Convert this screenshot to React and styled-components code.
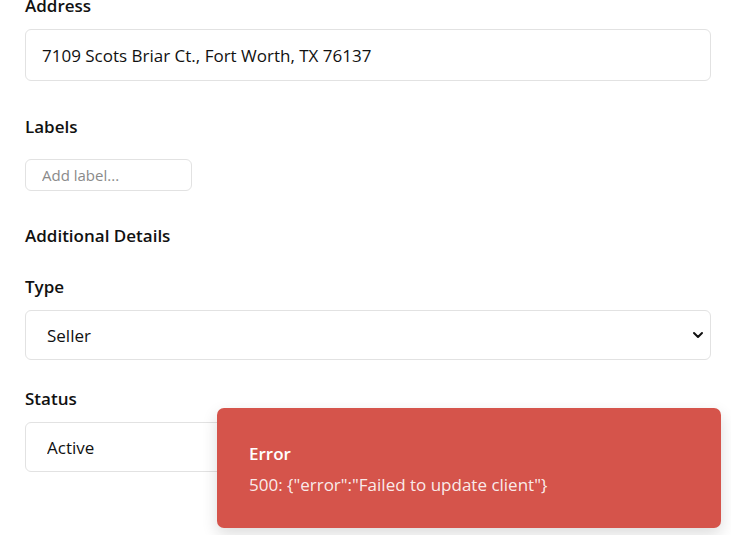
import React from 'react';
import styled, { createGlobalStyle } from 'styled-components';

const GlobalStyle = createGlobalStyle`
  html, body {
    margin: 0;
    padding: 0;
    background: #ffffff;
    overflow: hidden;
  }
  body {
    font-family: "Open Sans", "Noto Sans", Arial, sans-serif;
    color: #111111;
  }
`;

const Page = styled.div`
  width: 731px;
  height: 535px;
  overflow: hidden;
  position: relative;
`;

const Form = styled.div`
  display: flex;
  flex-direction: column;
  padding: 0 20px 0 25px;
  margin-top: -6px;
`;

const Field = styled.div`
  display: flex;
  flex-direction: column;
  gap: ${(p) => p.$gap || 11}px;
  margin-bottom: ${(p) => p.$space || 27}px;
`;

const Label = styled.label`
  font-size: 17px;
  font-weight: 600;
  line-height: 24px;
  color: #111111;
`;

const Section = styled.h3`
  margin: 0 0 27px;
  font-size: 17px;
  font-weight: 600;
  line-height: 24px;
  color: #111111;
`;

const Input = styled.input`
  box-sizing: border-box;
  width: ${(p) => (p.$small ? '167px' : '100%')};
  height: ${(p) => (p.$small ? '32px' : '52px')};
  padding: 0 16px;
  border: 1px solid #e2e2e2;
  border-radius: 6px;
  font-family: inherit;
  font-size: ${(p) => (p.$small ? '15px' : '17px')};
  color: #111111;
  background: #ffffff;
  outline: none;

  &::placeholder {
    color: #8a8a8a;
  }
`;

const SelectWrap = styled.div`
  position: relative;
  width: 100%;
`;

const Select = styled.select`
  box-sizing: border-box;
  width: 100%;
  height: 50px;
  padding: 0 21px;
  border: 1px solid #e2e2e2;
  border-radius: 6px;
  font-family: inherit;
  font-size: 17px;
  color: #111111;
  background: #ffffff;
  appearance: none;
  outline: none;
`;

const Chevron = styled.svg`
  position: absolute;
  right: 7px;
  top: 50%;
  transform: translateY(-50%);
  width: 12px;
  height: 12px;
  pointer-events: none;
`;

const Toast = styled.div`
  position: absolute;
  right: 10px;
  bottom: 7px;
  box-sizing: border-box;
  width: 504px;
  height: 120px;
  padding: 34px 32px;
  background: #d5544b;
  border-radius: 7px;
  box-shadow: 0 6px 16px rgba(0, 0, 0, 0.14);
  color: #ffffff;
  display: flex;
  flex-direction: column;
  gap: 8px;
`;

const ToastTitle = styled.div`
  font-size: 17px;
  font-weight: 600;
  line-height: 23px;
`;

const ToastText = styled.div`
  font-size: 17px;
  line-height: 23px;
  color: rgba(255, 255, 255, 0.9);
`;

const Dropdown = ({ value }) => (
  <SelectWrap>
    <Select defaultValue={value}>
      <option>{value}</option>
    </Select>
    <Chevron viewBox="0 0 12 12">
      <path d="M2 4l4 4 4-4" fill="none" stroke="#111" strokeWidth="2" strokeLinecap="round" strokeLinejoin="round" />
    </Chevron>
  </SelectWrap>
);

const App = () => (
  <Page>
    <GlobalStyle />
    <Form>
      <Field $space={34}>
        <Label>Address</Label>
        <Input defaultValue="7109 Scots Briar Ct., Fort Worth, TX 76137" />
      </Field>
      <Field $gap={20} $space={33}>
        <Label>Labels</Label>
        <Input $small placeholder="Add label..." />
      </Field>
      <Section>Additional Details</Section>
      <Field>
        <Label>Type</Label>
        <Dropdown value="Seller" />
      </Field>
      <Field>
        <Label>Status</Label>
        <Dropdown value="Active" />
      </Field>
    </Form>
    <Toast>
      <ToastTitle>Error</ToastTitle>
      <ToastText>500: {'{"error":"Failed to update client"}'}</ToastText>
    </Toast>
  </Page>
);

export default App;
